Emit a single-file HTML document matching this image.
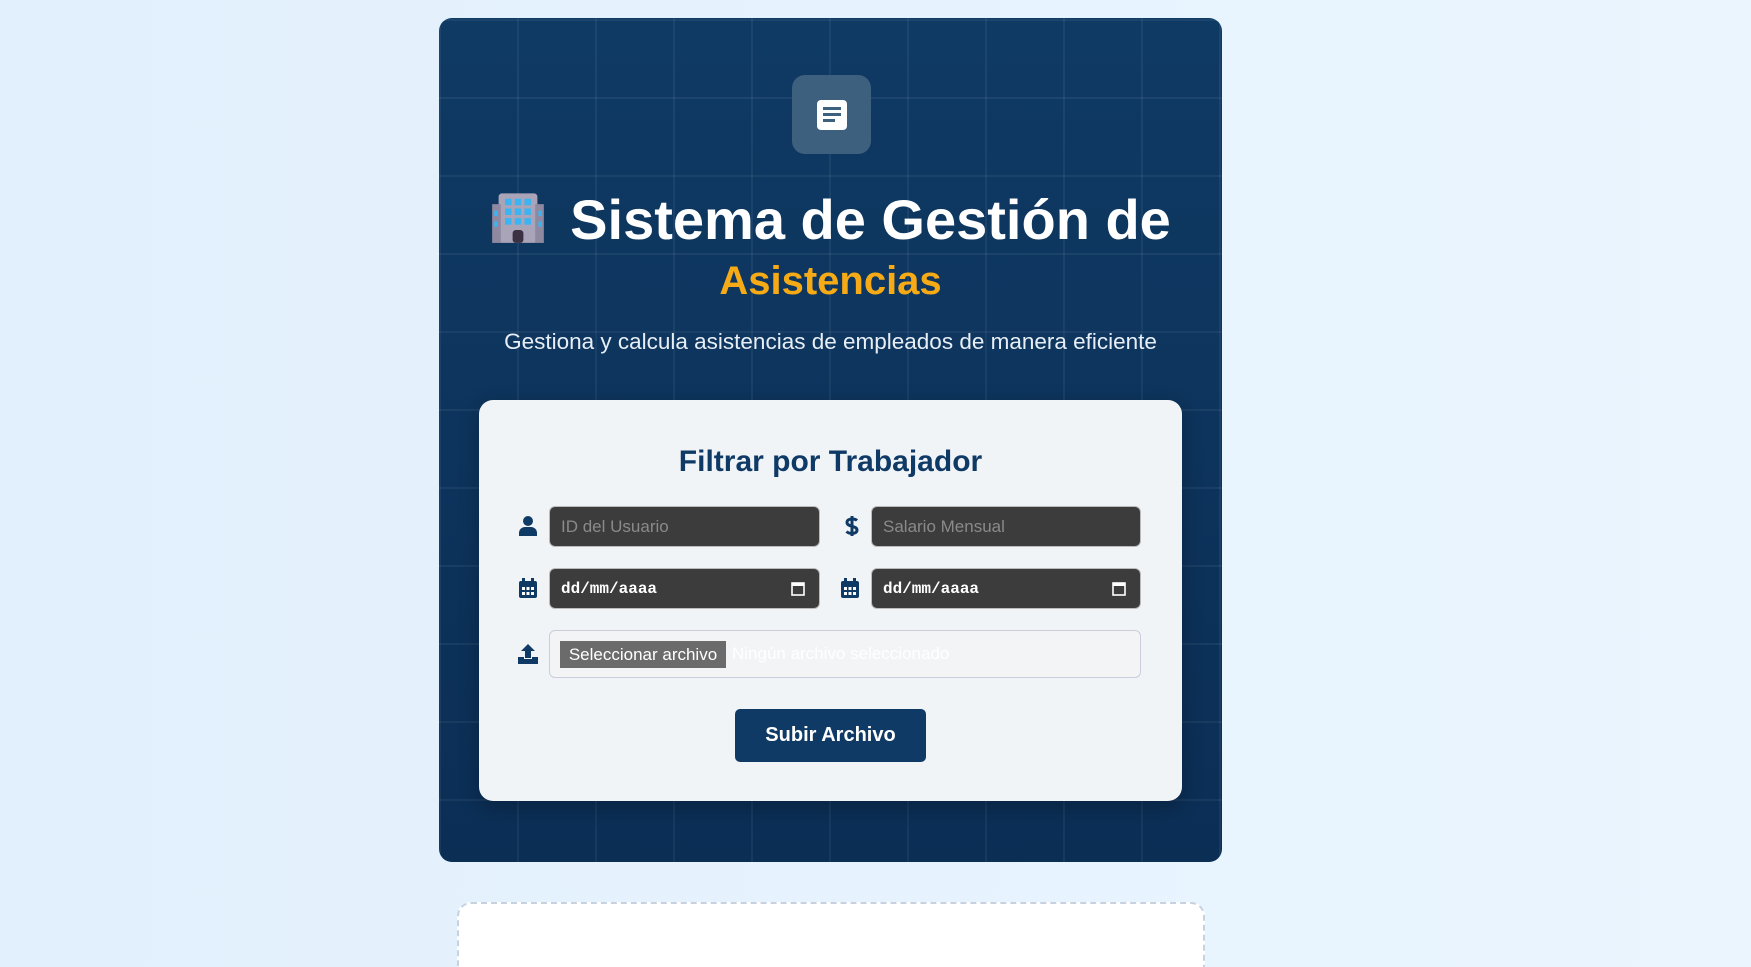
<!DOCTYPE html>
<html><head><meta charset="utf-8"><style>
*{box-sizing:border-box;margin:0;padding:0}
html{width:1751px;height:967px;overflow:hidden}
body{width:1751px;height:967px;overflow:hidden;background:linear-gradient(90deg,#e2f0fd,#eaf5fe);font-family:"Liberation Sans",Arial,sans-serif;position:relative}
.card{position:absolute;left:439px;top:18px;width:783px;height:844px;border-radius:13px;background:linear-gradient(180deg,#0f3a64,#0b2e55);overflow:hidden}
.grid{position:absolute;inset:0;background-image:linear-gradient(90deg,rgba(255,255,255,.055) 2px,transparent 2px),linear-gradient(0deg,rgba(255,255,255,.055) 2px,transparent 2px);background-size:78px 78px;background-position:0 3px}
.ico{position:absolute;left:353px;top:57px;width:79px;height:79px;border-radius:13px;background:#3e607f}
.t1{position:absolute;left:-20px;width:823px;top:170px;text-align:center;color:#fff;font-weight:bold;font-size:56px;line-height:64px;white-space:nowrap}
.t2{position:absolute;left:0;width:783px;top:238px;text-align:center;color:#f6ab16;font-weight:bold;font-size:40px;line-height:50px}
.sub{position:absolute;left:0;width:783px;top:311px;text-align:center;color:#e8eef5;font-size:22.5px}
.form{position:absolute;left:40px;top:382px;width:703px;height:401px;border-radius:14px;background:#f1f4f7;box-shadow:0 6px 20px rgba(0,0,0,.25)}
.ft{position:absolute;left:0;width:703px;top:45px;text-align:center;color:#0f3a66;font-weight:bold;font-size:30px}
.in{position:absolute;height:41px;border-radius:6px;background:#3c3c3c;border:1px solid #bbb;color:#8a8a8a;font-size:17px;padding:10px 11px}
.dt{color:#fff;font-family:"Liberation Mono",monospace;font-size:16px;font-weight:bold;padding-top:11px}
.sv{position:absolute}
.file{position:absolute;left:70px;top:230px;width:592px;height:48px;border:1px solid #ccd;border-radius:6px;background:#f2f4f6}
.fb{position:absolute;left:10px;top:10px;width:166px;height:27px;background:#6b6b6b;color:#fff;font-size:17px;text-align:center;line-height:27px}
.fn{position:absolute;left:182px;top:13px;color:#fff;font-size:17px}
.btn{position:absolute;left:256px;top:309px;width:191px;height:53px;border-radius:5px;background:#0f3a66;color:#fff;font-weight:bold;font-size:20px;text-align:center;line-height:53px}
.bot{position:absolute;left:457px;top:902px;width:748px;height:65px;background:#fff;border:2px dashed #c6d2e0;border-bottom:none;border-radius:14px 14px 0 0}
</style></head><body>
<div class="card"><div class="grid"></div>
<div class="ico"><svg width="79" height="79" viewBox="0 0 79 79"><rect x="25" y="25" width="30" height="30" rx="4" fill="#fff"/><rect x="31" y="32" width="18" height="3" fill="#3e607f"/><rect x="31" y="38" width="18" height="3" fill="#3e607f"/><rect x="31" y="44" width="12" height="3" fill="#3e607f"/></svg></div>
<div class="t1"><svg width="56" height="54" viewBox="0 0 52 50" style="vertical-align:-4px;margin-right:24px"><rect x="8" y="4" width="36" height="46" rx="3" fill="#a9a4b8"/><rect x="2" y="14" width="8" height="36" fill="#8e88a0"/><rect x="42" y="14" width="8" height="36" fill="#8e88a0"/><g fill="#3ab4f2"><rect x="14" y="9" width="6" height="6"/><rect x="23" y="9" width="6" height="6"/><rect x="32" y="9" width="6" height="6"/><rect x="14" y="18" width="6" height="6"/><rect x="23" y="18" width="6" height="6"/><rect x="32" y="18" width="6" height="6"/><rect x="14" y="27" width="6" height="6"/><rect x="23" y="27" width="6" height="6"/><rect x="32" y="27" width="6" height="6"/><rect x="4" y="20" width="3" height="5"/><rect x="45" y="20" width="3" height="5"/><rect x="4" y="30" width="3" height="5"/><rect x="45" y="30" width="3" height="5"/></g><rect x="21" y="38" width="10" height="12" rx="3" fill="#3b3142"/></svg>Sistema de Gestión de</div>
<div class="t2">Asistencias</div>
<div class="sub">Gestiona y calcula asistencias de empleados de manera eficiente</div>
<div class="form">
<div class="ft">Filtrar por Trabajador</div>
<svg class="sv" style="left:40px;top:116px" width="18" height="20" viewBox="0 0 18 20"><circle cx="9" cy="5" r="5" fill="#0f3a66"/><path d="M0 20v-3a6 6 0 0 1 6-6h6a6 6 0 0 1 6 6v3z" fill="#0f3a66"/></svg>
<div class="in" style="left:70px;top:106px;width:271px">ID del Usuario</div>
<svg class="sv" style="left:366px;top:115px" width="14" height="22" viewBox="0 0 14 22"><path d="M7 1v20M12 5.5C10 3.5 2 3 2 7.5s10 3 10 7.5S4 19 1.5 16.5" stroke="#0f3a66" stroke-width="3" fill="none"/></svg>
<div class="in" style="left:392px;top:106px;width:270px">Salario Mensual</div>
<svg class="sv" style="left:40px;top:178px" width="18" height="20" viewBox="0 0 18 20"><rect x="3" y="0" width="3" height="4" fill="#0f3a66"/><rect x="12" y="0" width="3" height="4" fill="#0f3a66"/><rect x="0" y="3" width="18" height="17" rx="2" fill="#0f3a66"/><g fill="#fff"><rect x="3" y="9" width="3" height="3"/><rect x="7.5" y="9" width="3" height="3"/><rect x="12" y="9" width="3" height="3"/><rect x="3" y="14" width="3" height="3"/><rect x="7.5" y="14" width="3" height="3"/><rect x="12" y="14" width="3" height="3"/></g></svg>
<div class="in dt" style="left:70px;top:168px;width:271px">dd/mm/aaaa<svg style="position:absolute;right:14px;top:12px" width="14" height="15" viewBox="0 0 14 15"><rect x="1" y="2" width="12" height="12" fill="none" stroke="#fff" stroke-width="1.6"/><rect x="1" y="2" width="12" height="3" fill="#fff"/></svg></div>
<svg class="sv" style="left:362px;top:178px" width="18" height="20" viewBox="0 0 18 20"><rect x="3" y="0" width="3" height="4" fill="#0f3a66"/><rect x="12" y="0" width="3" height="4" fill="#0f3a66"/><rect x="0" y="3" width="18" height="17" rx="2" fill="#0f3a66"/><g fill="#fff"><rect x="3" y="9" width="3" height="3"/><rect x="7.5" y="9" width="3" height="3"/><rect x="12" y="9" width="3" height="3"/><rect x="3" y="14" width="3" height="3"/><rect x="7.5" y="14" width="3" height="3"/><rect x="12" y="14" width="3" height="3"/></g></svg>
<div class="in dt" style="left:392px;top:168px;width:270px">dd/mm/aaaa<svg style="position:absolute;right:14px;top:12px" width="14" height="15" viewBox="0 0 14 15"><rect x="1" y="2" width="12" height="12" fill="none" stroke="#fff" stroke-width="1.6"/><rect x="1" y="2" width="12" height="3" fill="#fff"/></svg></div>
<svg class="sv" style="left:39px;top:244px" width="20" height="20" viewBox="0 0 20 20"><path d="M10 0L3 7h4v7h6V7h4z" fill="#0f3a66"/><path d="M0 13h6v2h8v-2h6v7H0z" fill="#0f3a66"/></svg>
<div class="file"><div class="fb">Seleccionar archivo</div><div class="fn">Ningún archivo seleccionado</div></div>
<div class="btn">Subir Archivo</div>
</div>
</div>
<div class="bot"></div>
</body></html>
